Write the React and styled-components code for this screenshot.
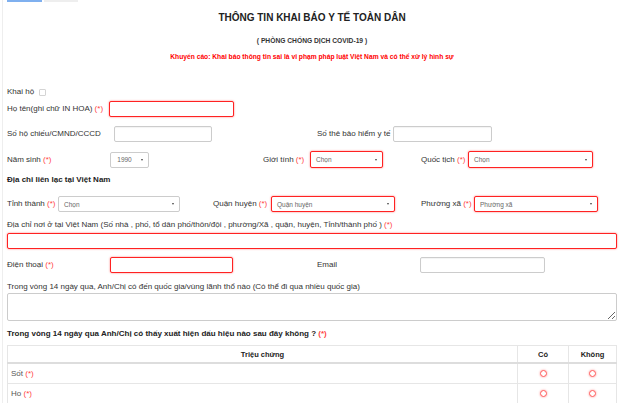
import React from 'react';
import styled, { createGlobalStyle } from 'styled-components';

const GlobalStyle = createGlobalStyle`
  html, body {
    margin: 0;
    padding: 0;
    background: #fff;
    font-family: "Liberation Sans", Arial, sans-serif;
    color: #333;
  }
`;

const Page = styled.div`
  width: 618px;
  height: 403px;
  margin-left: 2px;
  border-left: 1px solid #eee;
  padding-left: 4px;
  padding-right: 3px;
  box-sizing: border-box;
  overflow: hidden;
`;

const Tabs = styled.div`
  display: flex;
  gap: 2px;
  height: 2px;
`;

const Tab = styled.div`
  width: ${(p) => p.$w}px;
  height: 2px;
  background: ${(p) => (p.$active ? '#7fb0ef' : '#eee')};
`;

const Title = styled.h1`
  margin: 9px 0 0;
  font-size: 10px;
  line-height: 14px;
  font-weight: bold;
  text-align: center;
  color: #222;
`;

const Subtitle = styled.div`
  margin-top: 11px;
  font-size: 6.7px;
  line-height: 10px;
  font-weight: bold;
  text-align: center;
  color: #333;
`;

const Warning = styled.div`
  margin-top: 6px;
  font-size: 6.7px;
  line-height: 10px;
  font-weight: bold;
  text-align: center;
  color: #f00;
`;

const Row = styled.div`
  display: flex;
  align-items: center;
  height: ${(p) => p.$h || 16}px;
  margin-top: ${(p) => p.$mt || 0}px;
`;

const Group = styled.div`
  display: flex;
  align-items: center;
  width: ${(p) => (p.$w ? `${p.$w}px` : 'auto')};
  flex-shrink: 0;
`;

const Label = styled.label`
  display: block;
  width: ${(p) => (p.$w ? `${p.$w}px` : 'auto')};
  flex-shrink: 0;
  font-size: 8px;
  line-height: 10px;
  color: #333;
  white-space: nowrap;
`;

const Req = styled.span`
  color: #f44;
`;

const Heading = styled.div`
  margin-top: ${(p) => p.$mt}px;
  font-size: 8px;
  line-height: 12px;
  font-weight: bold;
  color: #222;
`;

const Input = styled.input`
  display: block;
  box-sizing: border-box;
  width: ${(p) => (p.$w ? `${p.$w}px` : '100%')};
  height: ${(p) => p.$h || 16}px;
  margin: 0;
  padding: 0 4px;
  font: inherit;
  font-size: 7px;
  border: 1px solid ${(p) => (p.$invalid ? '#f22' : '#ccc')};
  border-radius: 2px;
  box-shadow: ${(p) => (p.$invalid ? '0 0 2px rgba(255, 0, 0, 0.55)' : 'inset 0 1px 1px rgba(0,0,0,0.05)')};
  background: #fff;
  outline: none;
`;

const Check = styled.span`
  display: inline-block;
  box-sizing: border-box;
  width: 7px;
  height: 7px;
  margin-left: 5px;
  border: 1px solid #d4d4d4;
  border-radius: 1px;
  background: #fff;
`;

const Select = styled.div`
  display: flex;
  align-items: center;
  justify-content: ${(p) => (p.$center ? 'center' : 'flex-start')};
  position: relative;
  box-sizing: border-box;
  width: ${(p) => p.$w}px;
  height: ${(p) => p.$h || 16}px;
  padding: ${(p) => (p.$center ? '0 10px 0 0' : '0 0 0 5px')};
  border: 1px solid ${(p) => (p.$invalid ? '#f22' : '#ccc')};
  border-radius: 2px;
  box-shadow: ${(p) => (p.$invalid ? '0 0 2px rgba(255, 0, 0, 0.55)' : 'none')};
  background: #fff;
  font-size: 6.5px;
  color: #666;

  &::after {
    content: '';
    position: absolute;
    right: 5px;
    top: 50%;
    margin-top: -1px;
    border-left: 1.5px solid transparent;
    border-right: 1.5px solid transparent;
    border-top: 2.5px solid #444;
  }
`;

const TextArea = styled.textarea`
  display: block;
  box-sizing: border-box;
  width: 100%;
  height: 28px;
  margin: 1px 0 0;
  border: 1px solid #ccc;
  border-radius: 2px;
  resize: vertical;
  font: inherit;
  font-size: 7px;
  outline: none;
`;

const Table = styled.table`
  width: 610px;
  margin-top: 5px;
  border-collapse: collapse;
  table-layout: fixed;
  font-size: 8px;
`;

const Th = styled.th`
  width: ${(p) => (p.$w ? `${p.$w}px` : 'auto')};
  height: 16px;
  padding: 0;
  border: 1px solid #e6e6e6;
  border-bottom: 2px solid #ddd;
  font-size: 7.5px;
  font-weight: bold;
  color: #222;
  text-align: center;
`;

const Td = styled.td`
  height: 19px;
  padding: 0 0 0 3px;
  border: 1px solid #e6e6e6;
  color: #555;
  text-align: ${(p) => (p.$center ? 'center' : 'left')};
`;

const Radio = styled.span`
  display: inline-block;
  box-sizing: border-box;
  width: 7px;
  height: 7px;
  margin-left: -3px;
  vertical-align: middle;
  border: 1px solid #f55;
  border-radius: 50%;
  box-shadow: 0 0 2px rgba(255, 60, 60, 0.6);
`;

const symptoms = ['Sốt', 'Ho'];

export default function App() {
  return (
    <>
      <GlobalStyle />
      <Page>
        <Tabs>
          <Tab $w={35} $active />
          <Tab $w={34} />
        </Tabs>
        <Title>THÔNG TIN KHAI BÁO Y TẾ TOÀN DÂN</Title>
        <Subtitle>( PHÒNG CHỐNG DỊCH COVID-19 )</Subtitle>
        <Warning>Khuyến cáo: Khai báo thông tin sai là vi phạm pháp luật Việt Nam và có thể xử lý hình sự</Warning>

        <Row $h={12} $mt={24}>
          <Label>Khai hộ</Label>
          <Check />
        </Row>

        <Row $mt={3}>
          <Label $w={102}>Họ tên(ghi chữ IN HOA) <Req>(*)</Req></Label>
          <Input $w={125} $invalid />
        </Row>

        <Row $mt={9}>
          <Group $w={310}>
            <Label $w={107}>Số hộ chiếu/CMND/CCCD</Label>
            <Input $w={98} />
          </Group>
          <Group>
            <Label $w={76}>Số thẻ bảo hiểm y tế</Label>
            <Input $w={99} />
          </Group>
        </Row>

        <Row $h={17} $mt={9}>
          <Group $w={256}>
            <Label $w={103}>Năm sinh <Req>(*)</Req></Label>
            <Select $w={39} $center>1990</Select>
          </Group>
          <Group $w={158}>
            <Label $w={47}>Giới tính <Req>(*)</Req></Label>
            <Select $w={73} $h={17} $invalid>Chọn</Select>
          </Group>
          <Group>
            <Label $w={47}>Quốc tịch <Req>(*)</Req></Label>
            <Select $w={125} $h={17} $invalid>Chọn</Select>
          </Group>
        </Row>

        <Heading $mt={6}>Địa chỉ liên lạc tại Việt Nam</Heading>

        <Row $mt={10}>
          <Group $w={206}>
            <Label $w={51}>Tỉnh thành <Req>(*)</Req></Label>
            <Select $w={122}>Chọn</Select>
          </Group>
          <Group $w={208}>
            <Label $w={58}>Quận huyện <Req>(*)</Req></Label>
            <Select $w={124} $invalid>Quận huyện</Select>
          </Group>
          <Group>
            <Label $w={53}>Phường xã <Req>(*)</Req></Label>
            <Select $w={124} $invalid>Phường xã</Select>
          </Group>
        </Row>

        <Row $h={10} $mt={8}>
          <Label>
            Địa chỉ nơi ở tại Việt Nam (Số nhà , phố, tổ dân phố/thôn/đội , phường/Xã , quận, huyện, Tỉnh/thành phố ) <Req>(*)</Req>
          </Label>
        </Row>
        <Row $mt={3}>
          <Input $w={610} $invalid />
        </Row>

        <Row $mt={8}>
          <Group $w={310}>
            <Label $w={103}>Điện thoại <Req>(*)</Req></Label>
            <Input $w={123} $invalid />
          </Group>
          <Group>
            <Label $w={103}>Email</Label>
            <Input $w={125} />
          </Group>
        </Row>

        <Row $h={10} $mt={9}>
          <Label>Trong vòng 14 ngày qua, Anh/Chị có đến quốc gia/vùng lãnh thổ nào (Có thể đi qua nhiều quốc gia)</Label>
        </Row>
        <TextArea />

        <Heading $mt={7}>
          Trong vòng 14 ngày qua Anh/Chị có thấy xuất hiện dấu hiệu nào sau đây không ? <Req>(*)</Req>
        </Heading>

        <Table>
          <thead>
            <tr>
              <Th>Triệu chứng</Th>
              <Th $w={50}>Có</Th>
              <Th $w={47}>Không</Th>
            </tr>
          </thead>
          <tbody>
            {symptoms.map((s) => (
              <tr key={s}>
                <Td>
                  {s} <Req>(*)</Req>
                </Td>
                <Td $center>
                  <Radio />
                </Td>
                <Td $center>
                  <Radio />
                </Td>
              </tr>
            ))}
          </tbody>
        </Table>
      </Page>
    </>
  );
}
